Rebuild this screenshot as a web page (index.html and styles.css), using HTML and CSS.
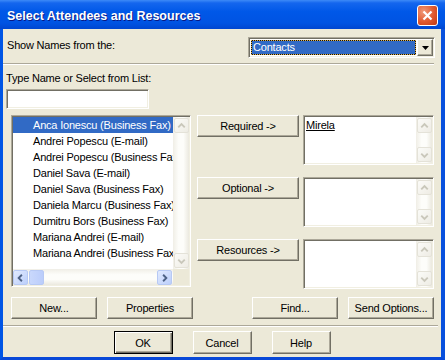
FILE: index.html
```html
<!DOCTYPE html>
<html lang="en">
<head>
  <meta charset="UTF-8" />
  <title>Select Attendees and Resources</title>
  <link rel="stylesheet" href="styles.css">
</head>
<body>

  <div class="window">
    <div class="titlebar">
      <span class="title">Select Attendees and Resources</span>
      <span class="close">
        <svg width="13" height="13" viewBox="0 0 13 13"><path d="M2.5 2.5 L10.5 10.5 M10.5 2.5 L2.5 10.5" stroke="#fff" stroke-width="2.2" fill="none"/></svg>
      </span>
    </div>

    <div class="frame">
      <div class="client">

        <div class="names-row">
          <span class="names-label">Show Names from the:</span>
          <div class="combo sunken">
            <span class="combo-value">Contacts</span>
            <span class="combo-btn raised">
              <svg width="7" height="4" viewBox="0 0 7 4"><polygon points="0,0 7,0 3.5,4" fill="#000"/></svg>
            </span>
          </div>
        </div>
        <div class="sep"></div>

        <label class="type-label" for="typeName">Type Name or Select from List:</label>
        <input class="name-input sunken" type="text" id="typeName">

        <div class="pick">
          <div class="listbox sunken">
            <ul class="names">
              <li class="selected">Anca Ionescu (Business Fax)</li>
              <li>Andrei Popescu (E-mail)</li>
              <li>Andrei Popescu (Business Fax)</li>
              <li>Daniel Sava (E-mail)</li>
              <li>Daniel Sava (Business Fax)</li>
              <li>Daniela Marcu (Business Fax)</li>
              <li>Dumitru Bors (Business Fax)</li>
              <li>Mariana Andrei (E-mail)</li>
              <li>Mariana Andrei (Business Fax)</li>
            </ul>
            <div class="vscroll">
              <span class="sb-btn off"><svg width="14" height="14" viewBox="0 0 14 14"><path d="M3.5 8.5 L7 5 L10.5 8.5" /></svg></span>
              <span class="sb-btn off"><svg width="14" height="14" viewBox="0 0 14 14"><path d="M3.5 5.5 L7 9 L10.5 5.5" /></svg></span>
            </div>
            <div class="hscroll">
              <span class="sb-btn"><svg width="14" height="14" viewBox="0 0 14 14"><path d="M8.5 3.5 L5 7 L8.5 10.5" /></svg></span>
              <span class="sb-thumb"></span>
              <span class="sb-btn"><svg width="14" height="14" viewBox="0 0 14 14"><path d="M5.5 3.5 L9 7 L5.5 10.5" /></svg></span>
            </div>
            <div class="corner"></div>
          </div>

          <div class="targets">
            <div class="target-row">
              <button class="btn raised wide">Required -&gt;</button>
              <div class="target-box sunken">
                <div class="target-text"><u>Mirela</u></div>
                <div class="vscroll">
                  <span class="sb-btn off"><svg width="14" height="14" viewBox="0 0 14 14"><path d="M3.5 8.5 L7 5 L10.5 8.5" /></svg></span>
                  <span class="sb-btn off"><svg width="14" height="14" viewBox="0 0 14 14"><path d="M3.5 5.5 L7 9 L10.5 5.5" /></svg></span>
                </div>
              </div>
            </div>
            <div class="target-row">
              <button class="btn raised wide">Optional -&gt;</button>
              <div class="target-box sunken">
                <div class="target-text"></div>
                <div class="vscroll">
                  <span class="sb-btn off"><svg width="14" height="14" viewBox="0 0 14 14"><path d="M3.5 8.5 L7 5 L10.5 8.5" /></svg></span>
                  <span class="sb-btn off"><svg width="14" height="14" viewBox="0 0 14 14"><path d="M3.5 5.5 L7 9 L10.5 5.5" /></svg></span>
                </div>
              </div>
            </div>
            <div class="target-row">
              <button class="btn raised wide">Resources -&gt;</button>
              <div class="target-box sunken">
                <div class="target-text"></div>
                <div class="vscroll">
                  <span class="sb-btn off"><svg width="14" height="14" viewBox="0 0 14 14"><path d="M3.5 8.5 L7 5 L10.5 8.5" /></svg></span>
                  <span class="sb-btn off"><svg width="14" height="14" viewBox="0 0 14 14"><path d="M3.5 5.5 L7 9 L10.5 5.5" /></svg></span>
                </div>
              </div>
            </div>
          </div>
        </div>

        <div class="actions">
          <div class="group">
            <button class="btn raised action">New...</button>
            <button class="btn raised action">Properties</button>
          </div>
          <div class="group">
            <button class="btn raised action">Find...</button>
            <button class="btn raised action">Send Options...</button>
          </div>
        </div>
        <div class="sep sep-bottom"></div>

        <div class="footer">
          <button class="btn dlg default">OK</button>
          <button class="btn raised dlg">Cancel</button>
          <button class="btn raised dlg">Help</button>
        </div>

      </div>
    </div>
  </div>

</body>
</html>
```

FILE: styles.css
```css
* {
  box-sizing: border-box;
}

body {
  margin: 0;
  font-family: "Liberation Sans", Arial, sans-serif;
  font-size: 11px;
  letter-spacing: -0.2px;
  color: #000;
  background: #fff;
}

.window {
  width: 445px;
  height: 360px;
  display: flex;
  flex-direction: column;
  background: #0055e5;
}

/* title bar */
.titlebar {
  height: 29px;
  flex: none;
  display: flex;
  align-items: center;
  justify-content: space-between;
  padding: 2px 7px 0 7px;
  background: linear-gradient(#3d8af7 0, #1466ee 3px, #0058e8 40%, #0053e2 80%, #0046d0 100%);
}

.title {
  color: #fff;
  font-weight: bold;
  font-size: 12.5px;
  letter-spacing: 0;
  text-shadow: 1px 1px #0a1883;
}

.close {
  width: 21px;
  height: 21px;
  display: flex;
  align-items: center;
  justify-content: center;
  border: 1px solid #fff;
  border-radius: 3px;
  background: radial-gradient(circle at 30% 30%, #f09a7a, #e0582e 55%, #c23a12);
}

.frame {
  flex: 1;
  display: flex;
  border-left: 3px solid #0055e5;
  border-right: 4px solid #0850dd;
  border-bottom: 3px solid #0848d8;
}

.client {
  flex: 1;
  display: flex;
  flex-direction: column;
  background: #ece9d8;
}

/* shared 3d edges */
.sunken {
  background: #fff;
  border: 1px solid;
  border-color: #aca899 #fff #fff #aca899;
  box-shadow: inset 1px 1px #716f64, inset -1px -1px #f1efe2;
  padding: 1px;
}

.raised {
  background: #ece9d8;
  border: 1px solid;
  border-color: #fff #716f64 #716f64 #fff;
  box-shadow: inset -1px -1px #aca899;
}

.btn {
  font-family: inherit;
  font-size: 11px;
  letter-spacing: -0.2px;
  color: #000;
  padding: 0;
  cursor: pointer;
}

.sep {
  flex: none;
  height: 2px;
  border-top: 1px solid #aca899;
  border-bottom: 1px solid #fff;
  margin-right: 7px;
}

/* top row */
.names-row {
  height: 34px;
  flex: none;
  display: flex;
  align-items: flex-start;
  justify-content: space-between;
  padding: 8px 6px 0 4px;
}

.names-label {
  margin-top: 2px;
  line-height: 13px;
}

.combo {
  width: 187px;
  height: 21px;
  display: flex;
}

.combo-value {
  flex: 1;
  margin: 1px 1px 1px 1px;
  padding-left: 1px;
  line-height: 13px;
  color: #fff;
  border: 1px dotted #e2b24a;
  background: linear-gradient(#316ac5, #316ac5) padding-box, linear-gradient(#111, #111) border-box;
}

.combo-btn {
  width: 16px;
  display: flex;
  align-items: center;
  justify-content: center;
}

.type-label {
  margin: 7px 0 0 3px;
  line-height: 13px;
}

.name-input {
  margin: 4px 0 0 3px;
  width: 143px;
  height: 20px;
  flex: none;
  outline: none;
}

/* list + targets */
.pick {
  display: flex;
  margin-top: 6px;
  padding-left: 8px;
}

.listbox {
  width: 180px;
  height: 172px;
  display: grid;
  grid-template-columns: 1fr 16px;
  grid-template-rows: 1fr 16px;
}

.names {
  list-style: none;
  margin: 0;
  padding: 0;
  overflow: hidden;
}

.names li {
  height: 16px;
  line-height: 16px;
  padding-left: 20px;
  white-space: nowrap;
  overflow: hidden;
}

.names li.selected {
  background: #316ac5;
  color: #fff;
}

.vscroll {
  display: flex;
  flex-direction: column;
  justify-content: space-between;
  padding: 1px 0 1px 1px;
  background: linear-gradient(to right, #f0eee6, #fdfdfa 35%, #fdfdfa 65%, #ebe9df);
}

.hscroll {
  display: flex;
  gap: 1px;
  padding: 1px 1px 0 0;
  background: linear-gradient(#f0eee6, #fdfdfa 35%, #fdfdfa 65%, #ebe9df);
}

.corner {
  background: #ece9d8;
}

.sb-btn {
  width: 15px;
  height: 15px;
  display: flex;
  align-items: center;
  justify-content: center;
  border: 1px solid #b7c9f4;
  border-radius: 2px;
  background: linear-gradient(135deg, #e1eafe, #bccffb);
}

.sb-btn path {
  fill: none;
  stroke: #4d6185;
  stroke-width: 2;
}

.sb-btn.off {
  border-color: #e4e2d8;
  background: linear-gradient(135deg, #fbfbf8, #eeece4);
}

.sb-btn.off path {
  stroke: #c9c7ba;
}

.sb-thumb {
  width: 15px;
  height: 15px;
  margin-right: auto;
  border: 1px solid #b7c9f4;
  border-radius: 2px;
  background: linear-gradient(to right, #c9d8fc, #bbcdfb);
}

.targets {
  margin-left: 6px;
  display: flex;
  flex-direction: column;
  gap: 12px;
}

.target-row {
  display: flex;
  align-items: flex-start;
  gap: 4px;
}

.wide {
  width: 102px;
  height: 22px;
}

.target-box {
  width: 131px;
  height: 50px;
  display: flex;
}

.target-text {
  flex: 1;
  padding: 2px 0 0 1px;
  line-height: 13px;
}

/* bottom buttons */
.actions {
  display: flex;
  justify-content: space-between;
  margin-top: 8px;
  padding: 0 7px 0 8px;
}

.group {
  display: flex;
  gap: 10px;
}

.action {
  width: 86px;
  height: 22px;
}

.sep-bottom {
  margin-top: 6px;
  margin-right: 3px;
}

.footer {
  display: flex;
  justify-content: center;
  gap: 20px;
  margin-top: 4px;
}

.dlg {
  width: 59px;
  height: 23px;
}

.default {
  background: #ece9d8;
  border: 1px solid #000;
  box-shadow: inset 1px 1px #fff, inset -1px -1px #716f64, inset -2px -2px #aca899;
}
```
